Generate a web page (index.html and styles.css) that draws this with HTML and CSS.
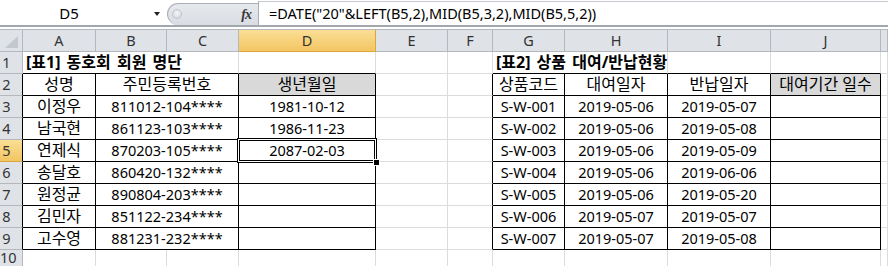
FILE: index.html
```html
<!DOCTYPE html>
<html lang="ko">
<head>
<meta charset="utf-8">
<link rel="stylesheet" href="styles.css">
</head>
<body>
<div class="toolbar">
  <div class="namebox">D5</div>
  <div class="dropzone"><span class="arrow"></span></div>
  <div class="pill"><span class="knob"></span><span class="fx">fx</span></div>
  <div class="formula">=DATE("20"&amp;LEFT(B5,2),MID(B5,3,2),MID(B5,5,2))</div>
</div>
<div class="sheet">
  <!-- header -->
  <div class="h corner"><svg width="22" height="22" viewBox="0 0 22 22"><polygon points="18,6 18,18 5,18" fill="#c3c8cf"/></svg></div>
  <div class="h">A</div><div class="h">B</div><div class="h">C</div><div class="h hs">D</div><div class="h">E</div><div class="h">F</div><div class="h">G</div><div class="h">H</div><div class="h">I</div><div class="h">J</div><div class="h"></div>

  <!-- row 1 -->
  <div class="r">1</div>
  <div class="c tb title s3">[표1] 동호회 회원 명단</div>
  <div class="c tb"></div><div class="c"></div><div class="c"></div>
  <div class="c tb title s2">[표2] 상품 대여/반납현황</div>
  <div class="c tb"></div><div class="c tb"></div><div class="c"></div>

  <!-- row 2 -->
  <div class="r tr">2</div>
  <div class="c t k">성명</div><div class="c t s2 k">주민등록번호</div><div class="c t g k">생년월일</div>
  <div class="c"></div><div class="c tr"></div>
  <div class="c t k">상품코드</div><div class="c t k">대여일자</div><div class="c t k">반납일자</div><div class="c t g k">대여기간 일수</div><div class="c"></div>

  <!-- row 3 -->
  <div class="r tr">3</div>
  <div class="c t k">이정우</div><div class="c t s2">811012-104****</div><div class="c t">1981-10-12</div>
  <div class="c"></div><div class="c tr"></div>
  <div class="c t">S-W-001</div><div class="c t">2019-05-06</div><div class="c t">2019-05-07</div><div class="c t"></div><div class="c"></div>

  <!-- row 4 -->
  <div class="r tr">4</div>
  <div class="c t k">남국현</div><div class="c t s2">861123-103****</div><div class="c t">1986-11-23</div>
  <div class="c"></div><div class="c tr"></div>
  <div class="c t">S-W-002</div><div class="c t">2019-05-06</div><div class="c t">2019-05-08</div><div class="c t"></div><div class="c"></div>

  <!-- row 5 -->
  <div class="r tr rs">5</div>
  <div class="c t k">연제식</div><div class="c t s2">870203-105****</div><div class="c t active">2087-02-03<span class="sel"><span class="handle"></span></span></div>
  <div class="c"></div><div class="c tr"></div>
  <div class="c t">S-W-003</div><div class="c t">2019-05-06</div><div class="c t">2019-05-09</div><div class="c t"></div><div class="c"></div>

  <!-- row 6 -->
  <div class="r tr">6</div>
  <div class="c t k">송달호</div><div class="c t s2">860420-132****</div><div class="c t"></div>
  <div class="c"></div><div class="c tr"></div>
  <div class="c t">S-W-004</div><div class="c t">2019-05-06</div><div class="c t">2019-06-06</div><div class="c t"></div><div class="c"></div>

  <!-- row 7 -->
  <div class="r tr">7</div>
  <div class="c t k">원정균</div><div class="c t s2">890804-203****</div><div class="c t"></div>
  <div class="c"></div><div class="c tr"></div>
  <div class="c t">S-W-005</div><div class="c t">2019-05-06</div><div class="c t">2019-05-20</div><div class="c t"></div><div class="c"></div>

  <!-- row 8 -->
  <div class="r tr">8</div>
  <div class="c t k">김민자</div><div class="c t s2">851122-234****</div><div class="c t"></div>
  <div class="c"></div><div class="c tr"></div>
  <div class="c t">S-W-006</div><div class="c t">2019-05-07</div><div class="c t">2019-05-07</div><div class="c t"></div><div class="c"></div>

  <!-- row 9 -->
  <div class="r tr">9</div>
  <div class="c t k">고수영</div><div class="c t s2">881231-232****</div><div class="c t"></div>
  <div class="c"></div><div class="c tr"></div>
  <div class="c t">S-W-007</div><div class="c t">2019-05-07</div><div class="c t">2019-05-08</div><div class="c t"></div><div class="c"></div>

  <!-- row 10 -->
  <div class="r last">10</div>
  <div class="c"></div><div class="c"></div><div class="c"></div><div class="c"></div><div class="c"></div><div class="c"></div><div class="c"></div><div class="c"></div><div class="c"></div><div class="c"></div><div class="c"></div>
</div>
</body>
</html>
```

FILE: styles.css
```css
html, body {
  margin: 0;
  padding: 0;
  background: #fff;
  overflow: hidden;
  width: 888px;
  height: 266px;
}
body {
  font-family: "Noto Sans", "Noto Sans CJK KR", sans-serif;
  font-size: 14.5px;
  color: #000;
}
.toolbar {
  display: flex;
  height: 25px;
  border-bottom: 2px solid #a3a8ae;
  margin-bottom: 2px;
  box-sizing: content-box;
}
.namebox {
  width: 138px;
  text-align: center;
  line-height: 26px;
  font-size: 15px;
}
.dropzone {
  width: 29px;
  position: relative;
}
.arrow {
  position: absolute;
  left: 16px;
  top: 12px;
  width: 0;
  height: 0;
  border-left: 3.5px solid transparent;
  border-right: 3.5px solid transparent;
  border-top: 4px solid #222;
}
.pill {
  margin-top: 3px;
  width: 91px;
  height: 22px;
  box-sizing: border-box;
  border: 1px solid #a9aeb5;
  border-right: none;
  border-bottom: none;
  border-radius: 11px 0 0 11px;
  background: linear-gradient(#e6e9ed, #d9dde3);
  display: flex;
  align-items: center;
  padding-left: 4px;
  padding-right: 7px;
}
.knob {
  width: 10px;
  height: 10px;
  border-radius: 50%;
  box-sizing: border-box;
  border: 1px solid #c2c6cc;
  background: radial-gradient(circle at 50% 40%, #f4f5f7, #cfd3d8);
  margin-top: -2px;
}
.fx {
  margin-left: auto;
  font-family: "Liberation Serif", serif;
  font-style: italic;
  font-weight: bold;
  font-size: 14px;
  color: #3a3a3a;
  letter-spacing: -1px;
}
.formula {
  flex: 1;
  margin-top: 1px;
  border-top: 1px solid #c6cad0;
  border-left: 1px solid #a9aeb5;
  padding-left: 10px;
  line-height: 23px;
  font-size: 14.5px;
  white-space: nowrap;
}
.sheet {
  display: grid;
  grid-template-columns: 23px 73px 71px 72px 137px 72px 45px 72px 103px 103px 110px 1fr;
  grid-template-rows: 23px repeat(9, 22px) 22px;
}
.sheet > div {
  box-sizing: border-box;
}
.h {
  background: #dfe3e8;
  border-top: 1px solid #b3b8be;
  border-right: 1px solid #b3b8be;
  border-bottom: 1px solid #b3b8be;
  text-align: center;
  line-height: 21px;
  font-size: 14.5px;
  color: #333;
}
.corner svg {
  display: block;
}
.hs {
  background: linear-gradient(#fadf95, #f3c563);
  border-right-color: #d9a93e;
  border-bottom-color: #d9a93e;
}
.r {
  background: #dfe3e8;
  border-right: 1px solid #b3b8be;
  border-bottom: 1px solid #b3b8be;
  font-size: 14.5px;
  color: #333;
  line-height: 21px;
  padding-right: 9px;
  text-align: center;
}
.r.last {
  line-height: 15px;
}
.rs {
  background: linear-gradient(#fadf95, #f3c563);
  border-bottom-color: #d9a93e;
}
.c {
  border-right: 1px solid #dadcdd;
  border-bottom: 1px solid #dadcdd;
  display: flex;
  align-items: center;
  justify-content: center;
  white-space: nowrap;
  line-height: 21px;
}
.k {
  font-size: 16px;
}
.s2 { grid-column: span 2; }
.s3 { grid-column: span 3; }
.t {
  border-right-color: #000;
  border-bottom-color: #000;
}
.tb { border-bottom-color: #000; }
.tr { border-right-color: #000; }
.g { background: #d9d9d9; }
.title {
  justify-content: flex-start;
  padding-left: 3px;
  font-weight: bold;
  font-size: 16px;
  word-spacing: 2px;
}
.active {
  position: relative;
}
.sel {
  position: absolute;
  left: -2px;
  top: -2px;
  right: -2px;
  bottom: -2px;
  border: 1px solid #000;
  box-shadow: inset 0 0 0 1px #fff, inset 0 0 0 2px #000;
  pointer-events: none;
}
.handle {
  position: absolute;
  right: -3px;
  bottom: -3px;
  width: 5px;
  height: 5px;
  background: #000;
  outline: 1px solid #fff;
}
```
